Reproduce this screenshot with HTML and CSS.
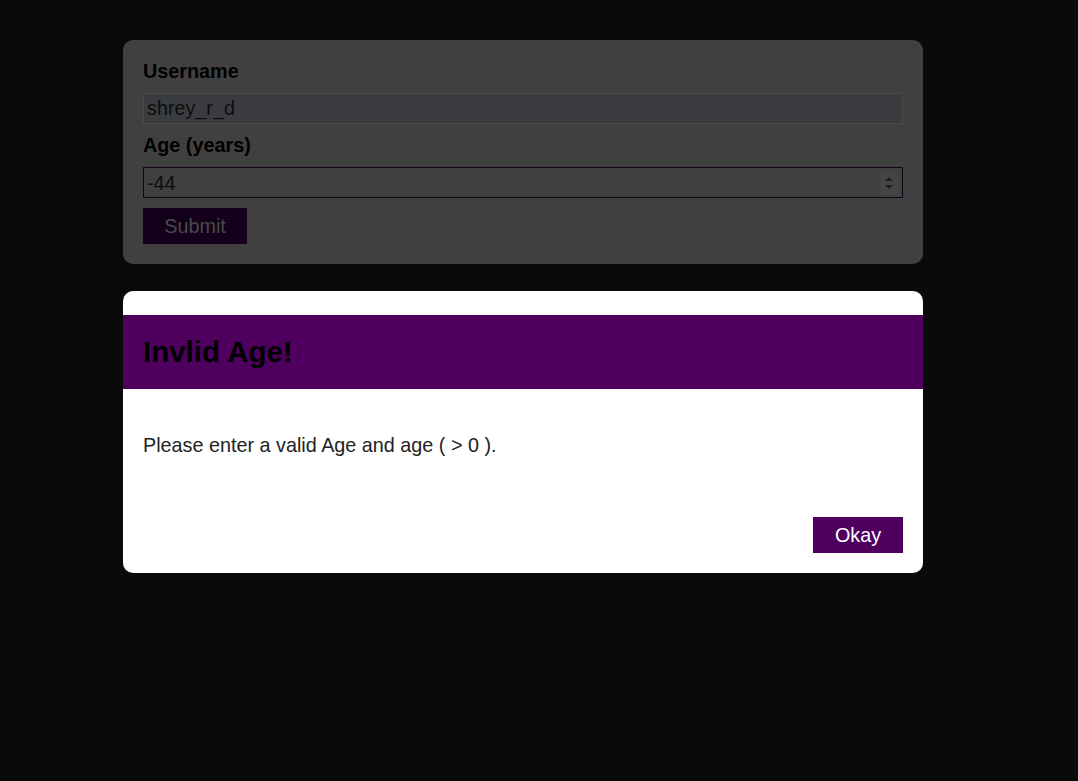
FILE: index.html
```html
<!DOCTYPE html>
<html>
<head>
<meta charset="utf-8">
<link rel="stylesheet" href="styles.css">
</head>
<body>
<div class="page">
  <form class="card">
    <label class="label" for="username">Username</label>
    <input class="field field-filled" id="username" type="text" value="shrey_r_d">
    <label class="label" for="age">Age (years)</label>
    <div class="field field-focus">
      <input class="field-input" id="age" type="text" value="-44">
      <span class="spinner">
        <svg width="10" height="14" viewBox="0 0 10 14"><path d="M1 5 L5 1 L9 5 Z M1 9 L9 9 L5 13 Z" fill="#1c1c1c"/></svg>
      </span>
    </div>
    <button class="btn btn-dim" type="button">Submit</button>
  </form>

  <div class="modal">
    <header class="modal-header"><h2 class="modal-title">Invlid Age!</h2></header>
    <div class="modal-content"><p class="modal-text">Please enter a valid Age and age ( &gt; 0 ).</p></div>
    <footer class="modal-actions"><button class="btn btn-primary" type="button">Okay</button></footer>
  </div>
</div>
</body>
</html>
```

FILE: styles.css
```css
* { box-sizing: border-box; }
html, body {
  margin: 0;
  background: #0a0a0a;
  font-family: "Liberation Sans", Arial, sans-serif;
  font-size: 19.8px;
  height: 100%;
}
.page {
  width: 800px;
  margin-left: 123px;
  padding-top: 40px;
}
.card {
  background: #404040;
  border-radius: 10px;
  padding: 20px;
  display: flex;
  flex-direction: column;
  align-items: flex-start;
}
.label {
  display: block;
  font-weight: bold;
  color: #000;
  line-height: 22px;
  margin-bottom: 11px;
}
.field {
  display: flex;
  align-items: center;
  width: 100%;
  height: 31px;
  margin: 0 0 10px 0;
  padding: 0 3px;
  font: inherit;
  line-height: 22px;
  color: #0e0e0e;
  background: #404040;
  border: 1px solid #4c4c4c;
  outline: none;
}
.field-filled {
  background: #3a3c3f;
}
.field-focus {
  border-color: #16001b;
  padding-right: 4px;
}
.field-input {
  flex: 1;
  min-width: 0;
  border: none;
  background: transparent;
  font: inherit;
  color: #0e0e0e;
  padding: 0;
  outline: none;
}
.spinner {
  width: 18px;
  height: 22px;
  background: #454545;
  display: flex;
  align-items: center;
  justify-content: center;
}
.btn {
  font: inherit;
  height: 36px;
  padding: 0 21px;
  border: 1px solid;
  cursor: pointer;
  line-height: 22px;
}
.btn-dim {
  background: #14001a;
  border-color: #14001a;
  color: #4a4a4a;
  width: 104px;
  padding: 0;
}
.modal {
  margin-top: 27px;
  background: #fff;
  border-radius: 10px;
  overflow: hidden;
  padding-top: 24px;
  padding-bottom: 20px;
}
.modal-header {
  background: #4f005f;
  height: 74px;
  display: flex;
  align-items: center;
  padding: 0 20px 1px;
}
.modal-title {
  margin: 0;
  font-size: 29.5px;
  line-height: 33px;
  font-weight: bold;
  color: #000;
}
.modal-content {
  padding: 45px 20px 0;
}
.modal-text {
  margin: 0;
  line-height: 22px;
  color: #222;
}
.modal-actions {
  display: flex;
  justify-content: flex-end;
  padding: 61px 20px 0 20px;
}
.btn-primary {
  background: #4f005f;
  border-color: #4f005f;
  color: #fff;
  width: 90px;
  padding: 0;
}
```
